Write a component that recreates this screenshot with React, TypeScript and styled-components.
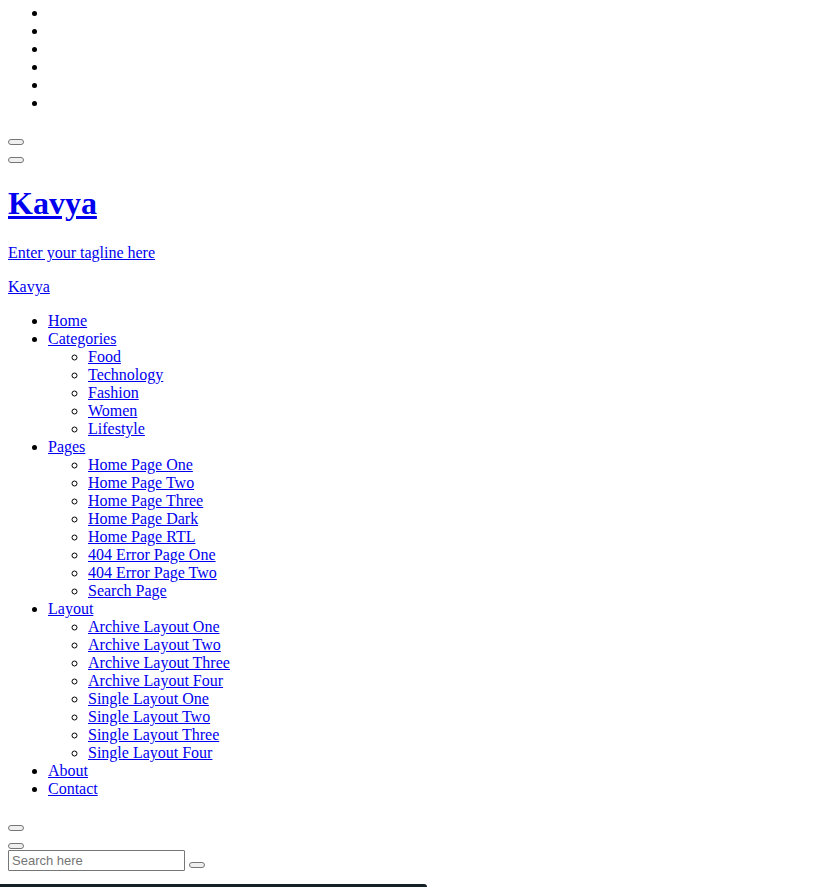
import React from "react";
import styled, { createGlobalStyle } from "styled-components";

const GlobalStyle = createGlobalStyle`
  html { scrollbar-width: none; }
  body {
    margin: 0;
    background: #fff;
    color: #000;
    font-family: "Liberation Serif", "Times New Roman", serif;
    font-size: 16px;
    line-height: 18px;
  }
`;

const Page = styled.div`
  padding: 4px 8px 0;
`;

const List = styled.ul`
  margin: 0;
  padding-left: 40px;
  list-style: disc;
`;

const SubList = styled(List)`
  list-style: circle;
`;

const Item = styled.li`
  min-height: 18px;
`;

const MenuList = styled(List)`
  margin-top: 16px;
`;

const Link = styled.a`
  color: #0000ee;
  text-decoration: underline;
`;

const Actions = styled.div`
  display: flex;
  flex-direction: column;
  align-items: flex-start;
  gap: 12px;
  margin-top: 27px;
`;

const SmallButton = styled.button`
  box-sizing: border-box;
  width: 16px;
  height: 6px;
  padding: 0;
  border: 1px solid #767676;
  border-radius: 3px;
  background: #efefef;
`;

const Title = styled.h1`
  margin: 22px 0;
  font-size: 32px;
  line-height: 37px;
  font-weight: bold;
`;

const Paragraph = styled.p`
  margin: 16px 0;
`;

const SearchForm = styled.form`
  display: flex;
  align-items: flex-end;
  gap: 4px;
  margin-top: 1px;
`;

const SearchInput = styled.input`
  box-sizing: border-box;
  width: 177px;
  height: 21px;
  padding: 1px 3px;
  border: 1px solid #767676;
  border-radius: 1px;
  font-family: "Liberation Sans", Arial, sans-serif;
  font-size: 13px;
  &::placeholder { color: #757575; }
`;

const SearchButton = styled(SmallButton)`
  margin-bottom: 3px;
`;

const BottomBar = styled.footer`
  width: 427px;
  max-width: 100%;
  height: 40px;
  margin-top: 13px;
  border-radius: 0 3px 0 0;
  background: #132024;
`;

const menu: { label: string; children?: string[] }[] = [
  { label: "Home" },
  { label: "Categories", children: ["Food", "Technology", "Fashion", "Women", "Lifestyle"] },
  {
    label: "Pages",
    children: [
      "Home Page One", "Home Page Two", "Home Page Three", "Home Page Dark",
      "Home Page RTL", "404 Error Page One", "404 Error Page Two", "Search Page",
    ],
  },
  {
    label: "Layout",
    children: [
      "Archive Layout One", "Archive Layout Two", "Archive Layout Three", "Archive Layout Four",
      "Single Layout One", "Single Layout Two", "Single Layout Three", "Single Layout Four",
    ],
  },
  { label: "About" },
  { label: "Contact" },
];

export default function App() {
  return (
    <>
      <GlobalStyle />
      <Page>
        <List>
          {Array.from({ length: 6 }, (_, i) => <Item key={i} />)}
        </List>
        <Actions>
          <SmallButton type="button" aria-label="Open menu" />
          <SmallButton type="button" aria-label="Toggle theme" />
        </Actions>
        <Title><Link href="#">Kavya</Link></Title>
        <Paragraph><Link href="#">Enter your tagline here</Link></Paragraph>
        <Paragraph><Link href="#">Kavya</Link></Paragraph>
        <nav>
          <MenuList>
            {menu.map((entry) => (
              <Item key={entry.label}>
                <Link href="#">{entry.label}</Link>
                {entry.children && (
                  <SubList>
                    {entry.children.map((child) => (
                      <Item key={child}><Link href="#">{child}</Link></Item>
                    ))}
                  </SubList>
                )}
              </Item>
            ))}
          </MenuList>
        </nav>
        <Actions>
          <SmallButton type="button" aria-label="Open search" />
          <SmallButton type="button" aria-label="Close search" />
        </Actions>
        <SearchForm>
          <SearchInput type="text" placeholder="Search here" aria-label="Search" />
          <SearchButton type="submit" aria-label="Submit search" />
        </SearchForm>
      </Page>
      <BottomBar />
    </>
  );
}
